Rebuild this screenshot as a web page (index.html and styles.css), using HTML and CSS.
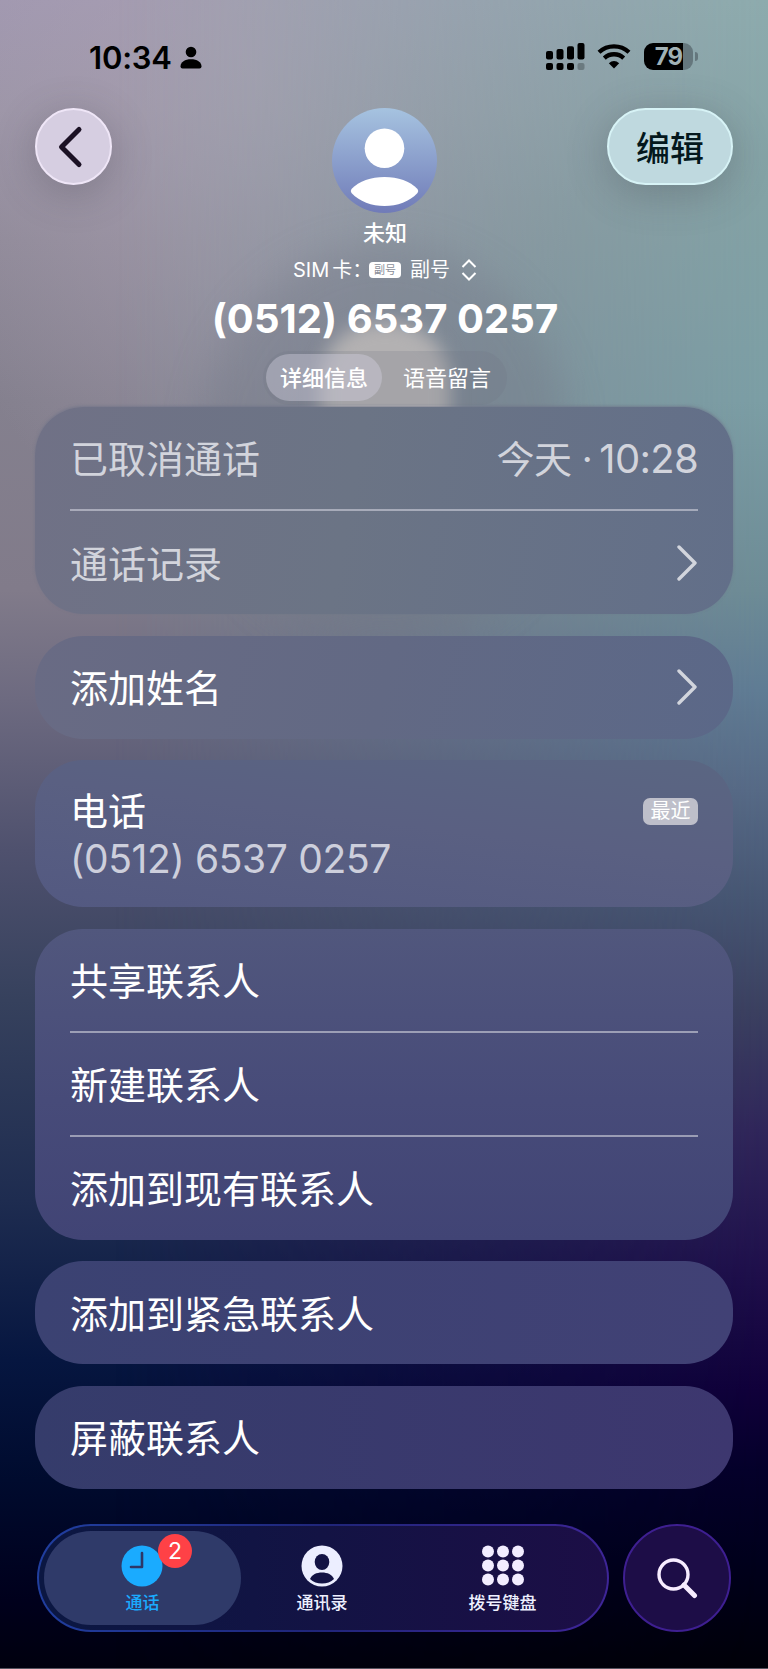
FILE: index.html
```html
<!DOCTYPE html>
<html lang="zh-CN">
<head>
  <meta charset="utf-8">
  <title>未知</title>
  <meta name="viewport" content="width=device-width, initial-scale=1">
  <link rel="stylesheet" href="styles.css">
</head>
<body>
  <div class="screen">
    <div class="poster-shadow"></div>
    <div class="poster-glow"></div>

    <!-- Status bar -->
    <div class="status-bar">
      <div class="status-left">
        <span class="time">10:34</span>
        <svg width="22" height="23" viewBox="0 0 22 23"><circle cx="11" cy="6" r="5.3"/><path d="M.5 20.5C.5 16 5 13.300 11 13.300S21.500 16 21.500 20.500Q21.500 22.500 19.500 22.500H2.500Q.5 22.500.5 20.500Z"/></svg>
      </div>
      <div class="status-right">
        <svg width="39" height="27" viewBox="0 0 39 27"><rect x="0" y="8" width="7" height="8.500" rx="2"/><rect x="10.500" y="6" width="7" height="10.500" rx="2"/><rect x="21" y="3.300" width="7" height="13.200" rx="2"/><rect x="31.500" y="0" width="7" height="16.500" rx="2"/><rect x="0" y="20" width="7" height="7" rx="2"/><rect x="10.500" y="20" width="7" height="7" rx="2"/><rect x="21" y="20" width="7" height="7" rx="2"/><rect x="31.500" y="20" width="7" height="7" rx="2" opacity=".25"/></svg>
        <svg class="wifi" width="34" height="25" viewBox="0 0 34 25"><path d="M2 8.300A22 22 0 0 1 32 8.300M7.300 14.100A14.200 14.200 0 0 1 26.700 14.100" fill="none" stroke="#000" stroke-width="4.300"/><path d="M17 24.500L11.800 19.200Q17 14.600 22.200 19.200Z"/></svg>
        <div class="battery"><span>79</span></div>
        <i class="battery-cap"></i>
      </div>
    </div>

    <header class="header">
      <button class="back" type="button">
        <svg width="26" height="44" viewBox="0 0 26 44"><path d="M22 4.500L4.500 22L22 39.500"/></svg>
      </button>
      <div class="contact">
        <svg class="avatar" width="105" height="105" viewBox="0 0 105 105">
          <defs><linearGradient id="avatar-bg" x1="0" y1="0" x2="0" y2="1"><stop offset="0" stop-color="#a6c3e0"/><stop offset="1" stop-color="#707bb8"/></linearGradient></defs>
          <circle cx="52.500" cy="52.500" r="52.500" fill="url(#avatar-bg)"/>
          <circle cx="52.500" cy="40.300" r="19.800" fill="#fff"/>
          <path d="M19.500 81C27 73 39 69 52.500 69S78 73 85.500 81Q87 83 85.500 85C78 93.500 65 98 52.500 98S27 93.500 19.500 85Q18 83 19.500 81Z" fill="#fff"/>
        </svg>
        <div class="name">未知</div>
        <div class="sim">
          <span class="sim-label">SIM<i></i>卡：</span>
          <span class="sim-tag">副号</span>
          <span class="sim-name">副号</span>
          <svg width="16" height="22" viewBox="0 0 16 22"><path d="M1.500 8L8 1.500L14.500 8M1.500 14L8 20.500L14.500 14"/></svg>
        </div>
        <div class="number">(0512) 6537 0257</div>
        <div class="segments">
          <span class="segment selected">详细信息</span>
          <span class="segment">语音留言</span>
        </div>
      </div>
      <button class="edit" type="button">编辑</button>
    </header>

    <main class="cards">
      <section class="card card-history">
        <div class="row"><span>已取消通话</span><span class="when">今天 · <b>10:28</b></span></div>
        <div class="row"><span>通话记录</span><svg class="chevron" width="22" height="36" viewBox="0 0 22 36"><path d="M3 2L19 18L3 34"/></svg></div>
      </section>
      <section class="card card-name">
        <div class="row"><span>添加姓名</span><svg class="chevron" width="22" height="36" viewBox="0 0 22 36"><path d="M3 2L19 18L3 34"/></svg></div>
      </section>
      <section class="card card-phone">
        <div class="phone-top"><span>电话</span><span class="recent">最近</span></div>
        <div class="phone-number">(0512) 6537 0257</div>
      </section>
      <section class="card card-actions">
        <div class="row"><span>共享联系人</span></div>
        <div class="row"><span>新建联系人</span></div>
        <div class="row"><span>添加到现有联系人</span></div>
      </section>
      <section class="card card-emergency">
        <div class="row"><span>添加到紧急联系人</span></div>
      </section>
      <section class="card card-block">
        <div class="row"><span>屏蔽联系人</span></div>
      </section>
    </main>

    <nav class="bottom">
      <div class="tabs">
        <div class="tab active">
          <svg width="42" height="42" viewBox="0 0 42 42"><circle cx="21" cy="21" r="20.500" fill="#1aabff"/><path d="M21 8V22H10" fill="none" stroke="#2d3768" stroke-width="2.600" stroke-linecap="round" stroke-linejoin="round"/></svg>
          <span>通话</span>
          <b class="badge">2</b>
        </div>
        <div class="tab">
          <svg width="42" height="42" viewBox="0 0 42 42"><circle cx="21" cy="21" r="20.500" fill="#eceeff"/><ellipse cx="21" cy="17" rx="7.300" ry="8" fill="#131345"/><path d="M9 34C11 29.500 15.500 27.500 21 27.500S31 29.500 33 34C30 37 25.500 38.500 21 38.500S12 37 9 34Z" fill="#131345"/></svg>
          <span>通讯录</span>
        </div>
        <div class="tab">
          <svg width="42" height="42" viewBox="0 0 42 42" fill="#f2edff"><circle cx="6" cy="6.500" r="6"/><circle cx="21" cy="6.500" r="6"/><circle cx="36" cy="6.500" r="6"/><circle cx="6" cy="20.500" r="6"/><circle cx="21" cy="20.500" r="6"/><circle cx="36" cy="20.500" r="6"/><circle cx="6" cy="34.500" r="6"/><circle cx="21" cy="34.500" r="6"/><circle cx="36" cy="34.500" r="6"/></svg>
          <span>拨号键盘</span>
        </div>
      </div>
      <button class="search" type="button">
        <svg width="42" height="42" viewBox="0 0 42 42"><circle cx="17.500" cy="17.500" r="14.500" stroke-width="3.400"/><path d="M28 28L38.500 38.500" stroke-width="5"/></svg>
      </button>
    </nav>
  </div>
</body>
</html>
```
FILE: styles.css
```css
* {
  box-sizing: border-box;
}
body {
  margin: 0;
  font-family: Inter, "Noto Sans CJK SC", sans-serif;
  color: #fff;
}
button {
  padding: 0;
  font-family: inherit;
}
svg {
  display: block;
  flex: none;
}
.screen {
  position: relative;
  width: 768px;
  height: 1669px;
  overflow: hidden;
  border-bottom: 1px solid #55535f;
  background:
    radial-gradient(ellipse 340px 520px at 250px 60px, rgba(170, 161, 178, 0.75), transparent),
    linear-gradient(#a097b0 0, #9b94a6 110px, #8f8998 240px, #84808e 400px, #817b8a 590px, #6d6a80 700px, #4f516e 850px, #36415d 1000px, #1e2c50 1200px, #061640 1360px, #000b2e 1480px, #00001c 1600px, #00000e 1669px);
}
.screen::before {
  content: "";
  position: absolute;
  inset: 0;
  background: linear-gradient(#8dabad 0, #83a2a5 200px, #7b9ea5 400px, #6d8c96 590px, #5f7c94 690px, #566a86 790px, #465673 900px, #3b4060 1010px, #30265a 1130px, #1f0f4b 1270px, #10003a 1390px, #04002a 1470px, #00001c 1560px, #000008 1669px);
  -webkit-mask-image: linear-gradient(90deg, transparent 15%, #000 100%);
  mask-image: linear-gradient(90deg, transparent 15%, #000 100%);
}

/* Blurred silhouette behind the header */
.poster-shadow {
  position: absolute;
  left: 200px;
  top: 245px;
  width: 370px;
  height: 400px;
  border-radius: 50%;
  background: rgba(112, 114, 130, 0.32);
  filter: blur(18px);
}
.poster-glow {
  position: absolute;
  left: 320px;
  top: 322px;
  width: 130px;
  height: 150px;
  border-radius: 60px 60px 0 0;
  background: #b3b1b2;
  filter: blur(9px);
}

.status-bar {
  position: relative;
  display: flex;
  justify-content: space-between;
  height: 108px;
  padding: 43px 70px 0 89px;
}
.status-left,
.status-right {
  display: flex;
  align-items: center;
  height: 27px;
}
.time {
  margin-top: 2px;
  margin-right: 8px;
  color: #000;
  font-size: 31px;
  font-weight: 600;
  letter-spacing: -0.200px;
}
.status-left svg {
  margin-top: 2px;
}
.wifi {
  margin: 0 13px 0 12px;
}
.battery {
  width: 49px;
  height: 27px;
  border-radius: 9px;
  background: linear-gradient(90deg, #000 39px, #65777d 39px);
  color: #a1b1b5;
  font-size: 24px;
  font-weight: 700;
  line-height: 27px;
  text-align: center;
  letter-spacing: -0.800px;
}
.battery-cap {
  width: 3px;
  height: 9px;
  margin-left: 2px;
  border-radius: 0 4px 4px 0;
  background: #65777d;
}

.header {
  position: relative;
  display: flex;
  justify-content: space-between;
  align-items: flex-start;
  height: 299px;
  padding: 0 35px;
}
.back,
.edit {
  display: flex;
  align-items: center;
  justify-content: center;
  height: 77px;
  border-radius: 39px;
  box-shadow: 0 8px 42px rgba(60, 60, 70, 0.3);
}
.back {
  width: 77px;
  margin-right: 51px;
  padding-right: 7px;
  border: 2px solid #efe6f7;
  background: #d6cee1;
}
.back path {
  fill: none;
  stroke: #1b1124;
  stroke-width: 5;
  stroke-linecap: round;
  stroke-linejoin: round;
}
.edit {
  width: 126px;
  border: 2px solid #d7f3f6;
  background: #bfd9df;
  color: #04181d;
  font-size: 34px;
  font-weight: 500;
}
.contact {
  display: flex;
  flex-direction: column;
  align-items: center;
}
.name {
  height: 40px;
  font-size: 22px;
  font-weight: 500;
  line-height: 40px;
}
.sim {
  display: flex;
  align-items: center;
  height: 34px;
  font-size: 20px;
  line-height: 32px;
  white-space: nowrap;
}
.sim-label {
  width: 76px;
}
.sim-label i {
  margin-right: 3px;
}
.sim-tag {
  width: 32px;
  height: 16px;
  margin-right: 9px;
  border-radius: 4px;
  background: #fff;
  color: #8b909a;
  font-size: 11px;
  line-height: 16px;
  text-align: center;
}
.sim-name {
  margin-right: 11px;
}
.sim path {
  fill: none;
  stroke: #fff;
  stroke-width: 2;
}
.number {
  height: 64px;
  font-size: 40px;
  font-weight: 700;
  line-height: 64px;
  white-space: nowrap;
  letter-spacing: 0.050px;
}
.segments {
  display: flex;
  width: 244px;
  height: 54px;
  padding: 3px;
  border-radius: 27px;
  background: rgba(112, 113, 128, 0.2);
}
.segment {
  flex: none;
  width: 130px;
  height: 47px;
  font-size: 22px;
  line-height: 48px;
  text-align: center;
}
.segment.selected {
  width: 116px;
  border-radius: 24px;
  background: rgba(213, 211, 226, 0.4);
  font-weight: 500;
}

.cards {
  position: relative;
  display: flex;
  flex-direction: column;
  gap: 21.500px;
  padding: 0 35px;
}
.card {
  padding: 0 35px;
  border-radius: 48px;
  font-size: 38px;
}
.row {
  display: flex;
  align-items: center;
  justify-content: space-between;
  height: 103px;
}
.row span {
  margin-bottom: 3px;
}
.row:first-child:not(:last-child) {
  height: 102px;
}
.row + .row {
  height: 104px;
  border-top: 2px solid rgba(200, 202, 214, 0.65);
}
.row + .row:last-child {
  height: 105px;
}
.card-history {
  background: linear-gradient(100deg, #707186, #6b7485 45%, #626f89);
  box-shadow: 0 -1px 3px rgba(110, 114, 135, 0.7);
  color: #d2d4dc;
}
.when {
  letter-spacing: -0.500px;
}
.when b {
  margin-left: -3px;
  font-size: 40px;
  font-weight: 400;
  letter-spacing: -0.700px;
}
.chevron path {
  fill: none;
  stroke: #d2d5dd;
  stroke-width: 3.400;
  stroke-linecap: round;
  stroke-linejoin: round;
}
.card-name {
  background: linear-gradient(105deg, #696b84, #626984 50%, #5b6888);
}
.card-phone {
  height: 147px;
  padding-top: 27px;
  background: linear-gradient(187deg, #5a6682, #5a6082 45%, #535981);
}
.phone-top {
  display: flex;
  align-items: center;
  justify-content: space-between;
  height: 48px;
}
.phone-top span:first-child {
  margin-bottom: 6px;
}
.recent {
  width: 55px;
  height: 27px;
  border-radius: 7px;
  background: #bebfca;
  font-size: 20px;
  line-height: 26px;
  text-align: center;
}
.phone-number {
  height: 48px;
  color: #cdcfdc;
  font-size: 39px;
  line-height: 47px;
  letter-spacing: -0.350px;
}
.card-actions {
  background: linear-gradient(#51577d, #474b79 55%, #414475);
}
.card-emergency {
  background: linear-gradient(90deg, #3b4272, #414175);
}
.card-block {
  background: linear-gradient(90deg, #353c6b, #3d376f);
}

.bottom {
  position: relative;
  display: flex;
  justify-content: space-between;
  margin-top: 35px;
  padding: 0 37px;
}
.tabs {
  display: flex;
  width: 572px;
  height: 108px;
  padding: 5px;
  border: 2px solid transparent;
  border-radius: 55px;
  background:
    linear-gradient(90deg, #0b1742, #131344 50%, #1c0e46) padding-box,
    linear-gradient(100deg, #203fa0, #20257a 50%, #3f2598) border-box;
}
.tab {
  position: relative;
  display: flex;
  flex-direction: column;
  align-items: center;
  width: 163px;
  height: 94px;
  padding-top: 14px;
  color: #eef0ff;
  font-size: 17px;
  font-weight: 500;
}
.tab.active {
  width: 198px;
  border-radius: 48px;
  background: #2f3a69;
  color: #1aabff;
}
.tab:last-child {
  width: 200px;
}
.tab span {
  line-height: 32px;
}
.badge {
  position: absolute;
  left: 114px;
  top: 3px;
  width: 34px;
  height: 34px;
  border-radius: 50%;
  background: #ff4146;
  color: #fff;
  font-size: 23px;
  font-weight: 400;
  line-height: 34px;
  text-align: center;
}
.search {
  display: flex;
  align-items: center;
  justify-content: center;
  width: 108px;
  height: 108px;
  border: 2px solid #3e1f91;
  border-radius: 50%;
  background: #1d0d47;
}
.search svg {
  fill: none;
  stroke: #f7ecff;
  stroke-linecap: round;
}
```
